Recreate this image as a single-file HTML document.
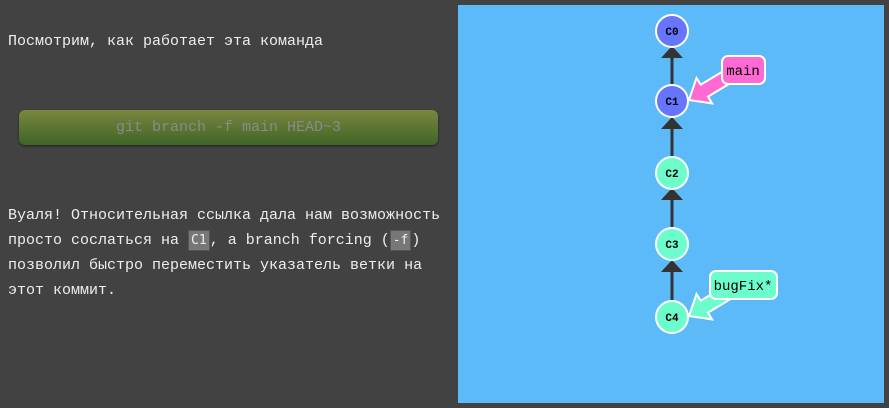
<!DOCTYPE html>
<html><head><style>
body{margin:0;width:889px;height:408px;background:#424242;overflow:hidden;position:relative;font-family:"Liberation Mono",monospace;color:#eee;font-size:15px}
p{position:absolute;left:8px;margin:0;line-height:25px;white-space:pre}
.btn{position:absolute;left:19px;top:110px;width:419px;height:35px;border-radius:6px;background:linear-gradient(#7a863e,#3f6528);color:#8a8a8a;text-align:center;line-height:35px;font-size:15px;box-shadow:0 1px 2px #222}
code{background:#777;border:1px solid #555;padding:2px 2px;color:#eee;font-size:13px}
svg{position:absolute;left:0;top:0}
</style></head><body>
<p style="top:29px">Посмотрим, как работает эта команда</p>
<div class="btn">git branch -f main HEAD~3</div>
<p style="top:203px">Вуаля! Относительная ссылка дала нам возможность
просто сослаться на <code>C1</code>, a branch forcing (<code>-f</code>)
позволил быстро переместить указатель ветки на
этот коммит.</p>
<svg width="889" height="408">
<rect x="458" y="5" width="426" height="398" fill="#5cbaf9"/>
<g stroke="#333" stroke-width="3"><line x1="672" y1="57" x2="672" y2="85"/><line x1="672" y1="127" x2="672" y2="157"/><line x1="672" y1="199" x2="672" y2="228"/><line x1="672" y1="270" x2="672" y2="301"/></g>
<g fill="#333"><polygon points="661,58 683,58 672,46"/><polygon points="661,129 683,129 672,117"/><polygon points="661,200 683,200 672,188"/><polygon points="661,272 683,272 672,260"/></g>
<polygon points="689,100 712.1,103.4 708,96.6 740.6,77 733.4,65 700.7,84.7 696.5,77.9" fill="#ff69d4" stroke="#fff" stroke-width="2"/>
<rect x="722" y="56" width="43" height="28" rx="6" fill="#ff69d4" stroke="#fff" stroke-width="2"/>
<polygon transform="translate(0,216)" points="689,100 712.1,103.4 708,96.6 740.6,77 733.4,65 700.7,84.7 696.5,77.9" fill="#6dfccc" stroke="#fff" stroke-width="2"/>
<rect x="710" y="271" width="67" height="28" rx="6" fill="#6dfccc" stroke="#fff" stroke-width="2"/>
<g stroke="#fff" stroke-width="2"><circle cx="672" cy="31" r="16" fill="#6674fe"/><circle cx="672" cy="101" r="16" fill="#6674fe"/><circle cx="672" cy="173" r="16" fill="#6dfccc"/><circle cx="672" cy="244" r="16" fill="#6dfccc"/><circle cx="672" cy="317" r="16" fill="#6dfccc"/></g>
<g font-family="Liberation Mono,monospace" font-size="11" font-weight="bold" fill="#000" text-anchor="middle"><text x="672" y="35">C0</text><text x="672" y="105">C1</text><text x="672" y="177">C2</text><text x="672" y="248">C3</text><text x="672" y="321">C4</text></g>
<g font-family="Liberation Mono,monospace" font-size="14" fill="#000" text-anchor="middle"><text x="743" y="75">main</text><text x="743" y="290">bugFix*</text></g>
</svg>
</body></html>
